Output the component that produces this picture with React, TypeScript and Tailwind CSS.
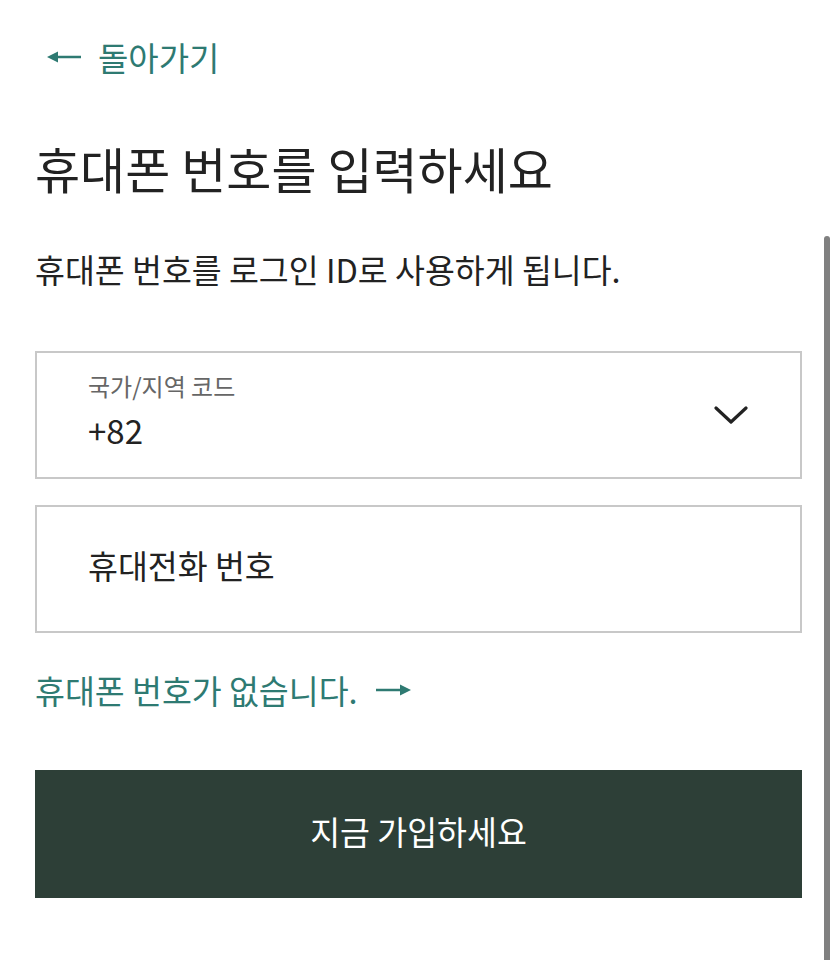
const font = {
  fontFamily: '"Noto Sans CJK KR", "Noto Sans", sans-serif',
};

const ArrowLeft = () => (
  <svg width="34" height="14" viewBox="0 0 34 14" className="shrink-0">
    <line x1="8" y1="7" x2="34" y2="7" stroke="#2e7a72" strokeWidth="2.5" />
    <polygon points="0,7 11,1.5 11,12.5" fill="#2e7a72" />
  </svg>
);

const ArrowRight = () => (
  <svg width="35" height="14" viewBox="0 0 35 14" className="shrink-0">
    <line x1="0" y1="7" x2="26" y2="7" stroke="#2e7a72" strokeWidth="2.5" />
    <polygon points="35,7 24,1.5 24,12.5" fill="#2e7a72" />
  </svg>
);

const Chevron = () => (
  <svg width="34" height="18" viewBox="0 0 34 18">
    <polyline
      points="2,2 17,16 32,2"
      fill="none"
      stroke="#222"
      strokeWidth="3.2"
      strokeLinecap="round"
      strokeLinejoin="round"
    />
  </svg>
);

export default function App() {
  return (
    <div className="relative min-h-[960px] bg-white overflow-hidden" style={font}>
      <div className="px-[35px] pt-[37px]">
        <a href="#" className="flex items-center h-[40px] pl-[12px] gap-[17px] text-[#2e7a72]">
          <ArrowLeft />
          <span className="text-[33px] leading-[40px]">돌아가기</span>
        </a>

        <h1 className="mt-[61px] text-[49px] leading-[60px] text-[#222]">
          휴대폰 번호를 입력하세요
        </h1>

        <p className="mt-[51px] text-[32.5px] leading-[40px] text-[#222]">
          휴대폰 번호를 로그인 ID로 사용하게 됩니다.
        </p>

        <div className="mt-[62px] h-[128px] border-2 border-[#c8c8c8] flex items-center justify-between pl-[51px] pr-[52px]">
          <div className="flex flex-col self-start pt-[18px]">
            <span className="text-[24px] leading-[30px] text-[#666]">국가/지역 코드</span>
            <span className="mt-[9px] text-[33px] leading-[40px] text-[#222]">+82</span>
          </div>
          <Chevron />
        </div>

        <div className="mt-[26px] h-[128px] border-2 border-[#c8c8c8] flex items-center pl-[51px] pb-[8px]">
          <span className="text-[32.5px] leading-[40px] text-[#222]">휴대전화 번호</span>
        </div>

        <a href="#" className="mt-[37px] flex items-center gap-[18px] text-[#2e7a72]">
          <span className="text-[32.5px] leading-[40px]">휴대폰 번호가 없습니다.</span>
          <ArrowRight />
        </a>

        <button className="mt-[60px] w-full h-[128px] bg-[#2d3f37] text-white text-[32.5px] leading-[40px] pb-[6px]">
          지금 가입하세요
        </button>
      </div>

      <div className="absolute right-[7px] top-[236px] bottom-0 w-[6px] rounded-t-full bg-[#808080]" />
    </div>
  );
}
